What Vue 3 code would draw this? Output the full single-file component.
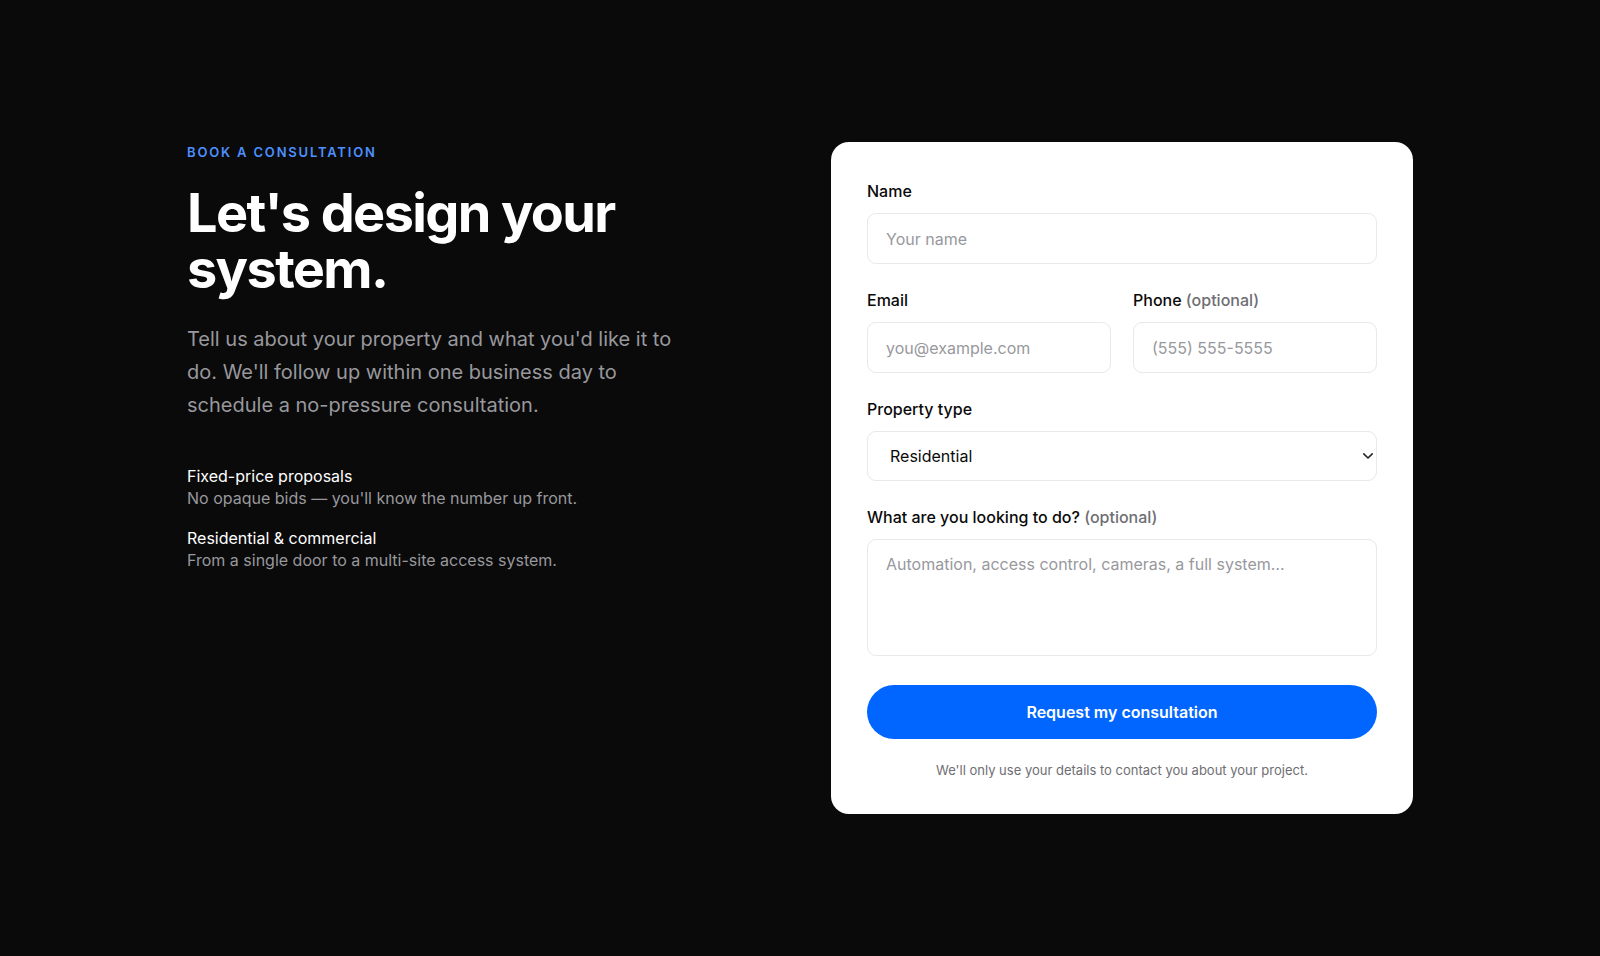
<template>
  <section class="consultation">
    <div class="container">
      <div class="intro">
        <p class="eyebrow">Book a consultation</p>
        <h2>Let's design your system.</h2>
        <p class="lead">
          Tell us about your property and what you'd like it to do. We'll follow up within one
          business day to schedule a no-pressure consultation.
        </p>
        <ul class="points">
          <li v-for="point in points" :key="point.title">
            <strong>{{ point.title }}</strong>
            <span>{{ point.text }}</span>
          </li>
        </ul>
      </div>

      <form class="card" @submit.prevent>
        <div class="field">
          <label for="name">Name</label>
          <input id="name" v-model="form.name" type="text" placeholder="Your name" />
        </div>
        <div class="row">
          <div class="field">
            <label for="email">Email</label>
            <input id="email" v-model="form.email" type="email" placeholder="you@example.com" />
          </div>
          <div class="field">
            <label for="phone">Phone <span class="optional">(optional)</span></label>
            <input id="phone" v-model="form.phone" type="tel" placeholder="(555) 555-5555" />
          </div>
        </div>
        <div class="field">
          <label for="property">Property type</label>
          <div class="select">
            <select id="property" v-model="form.property">
              <option>Residential</option>
              <option>Commercial</option>
            </select>
            <svg width="12" height="8" viewBox="0 0 12 8" aria-hidden="true">
              <path d="M1.8 1.8 6 6l4.2-4.2" />
            </svg>
          </div>
        </div>
        <div class="field">
          <label for="message">What are you looking to do? <span class="optional">(optional)</span></label>
          <textarea
            id="message"
            v-model="form.message"
            placeholder="Automation, access control, cameras, a full system…"
          ></textarea>
        </div>
        <button type="submit">Request my consultation</button>
        <p class="note">We'll only use your details to contact you about your project.</p>
      </form>
    </div>
  </section>
</template>

<script setup>
import { reactive } from 'vue'

const points = [
  { title: 'Fixed-price proposals', text: "No opaque bids — you'll know the number up front." },
  { title: 'Residential & commercial', text: 'From a single door to a multi-site access system.' }
]

const form = reactive({
  name: '',
  email: '',
  phone: '',
  property: 'Residential',
  message: ''
})
</script>

<style>
body {
  margin: 0;
  background: #0a0a0a;
}
</style>

<style scoped>
* {
  box-sizing: border-box;
}

.consultation {
  min-height: 100vh;
  padding: 142px 24px;
  background: #0a0a0a;
  color: #fff;
  font-family: Inter, 'Liberation Sans', sans-serif;
  font-size: 16px;
}

.container {
  display: grid;
  grid-template-columns: 1fr 1fr;
  gap: 62px;
  align-items: start;
  max-width: 1226px;
  margin: 0 auto;
}

.eyebrow {
  margin: 0 0 23px;
  color: #4d90ff;
  font-size: 13px;
  line-height: 20px;
  font-weight: 600;
  letter-spacing: 0.14em;
  text-transform: uppercase;
}

h2 {
  margin: 0 0 26px;
  font-size: 54px;
  line-height: 56px;
  font-weight: 700;
  letter-spacing: -0.03em;
}

.lead {
  max-width: 500px;
  margin: 0 0 43px;
  color: #98989d;
  font-size: 20px;
  line-height: 33px;
}

.points {
  display: grid;
  gap: 18px;
  margin: 0;
  padding: 0;
  list-style: none;
  color: #98989d;
  line-height: 22px;
}

.points strong {
  display: block;
  color: #fff;
  font-weight: 400;
}

.card {
  display: flex;
  flex-direction: column;
  gap: 23px;
  padding: 36px;
  border-radius: 18px;
  background: #fff;
  color: #0a0a0a;
}

.row {
  display: grid;
  grid-template-columns: 1fr 1fr;
  gap: 22px;
}

.field {
  display: flex;
  flex-direction: column;
  gap: 8px;
  min-width: 0;
}

label {
  font-weight: 500;
  line-height: 27px;
}

.optional {
  color: #6e6e73;
}

input,
select,
textarea {
  width: 100%;
  height: 51px;
  padding: 13px 18px;
  border: 1px solid #e8e8ed;
  border-radius: 9px;
  outline: none;
  background: #fff;
  color: #0a0a0a;
  font-family: inherit;
  font-size: 16px;
  line-height: 22px;
}

.select {
  position: relative;
}

select {
  display: block;
  height: 50px;
  padding-left: 22px;
  appearance: none;
}

.select svg {
  position: absolute;
  top: 50%;
  right: 3px;
  margin-top: -4px;
  fill: none;
  stroke: #2c2c2e;
  stroke-width: 1.7;
  stroke-linecap: round;
  stroke-linejoin: round;
  pointer-events: none;
}

textarea {
  display: block;
  height: 117px;
  resize: none;
}

input::placeholder,
textarea::placeholder {
  color: #98989d;
}

button {
  height: 54px;
  margin-top: 6px;
  border: none;
  border-radius: 27px;
  background: #0066ff;
  color: #fff;
  font-family: inherit;
  font-size: 16px;
  font-weight: 600;
  cursor: pointer;
}

.note {
  margin: 0;
  color: #6e6e73;
  font-size: 13px;
  line-height: 16px;
  text-align: center;
}

@media (max-width: 900px) {
  .container {
    grid-template-columns: 1fr;
  }
}
</style>
